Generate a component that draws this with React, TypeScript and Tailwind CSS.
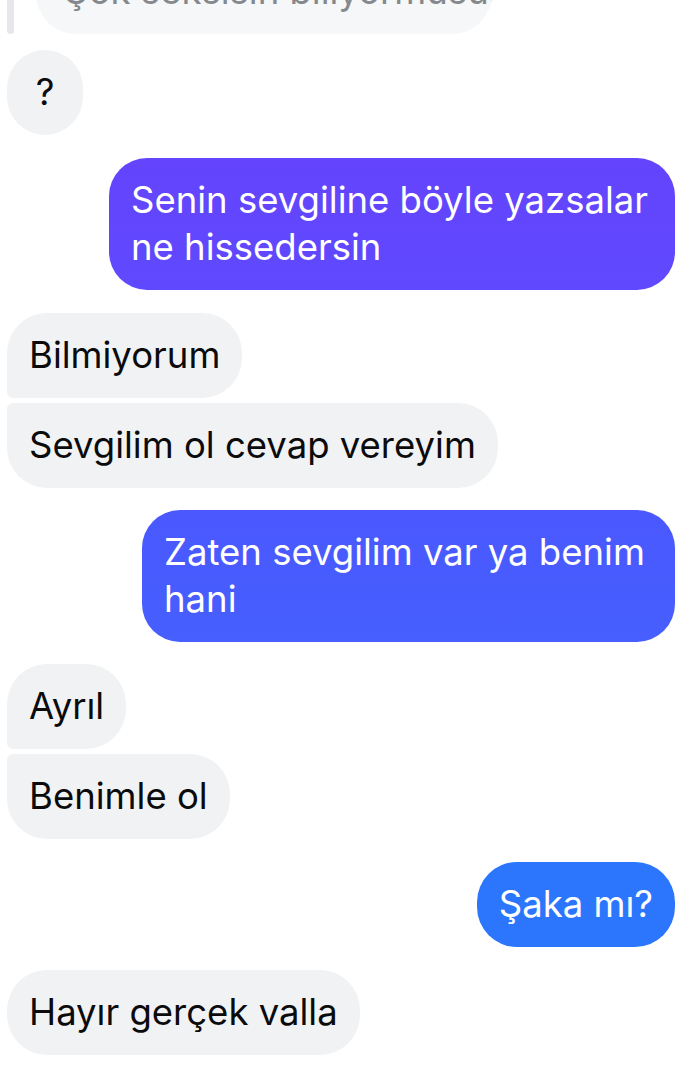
const font = { fontFamily: "Inter, 'Noto Sans', sans-serif" };

type Msg = {
  text: string;
  mine?: boolean;
  color?: string;
  width?: string;
  round: string;
  gap: string;
};

const messages: Msg[] = [
  { text: "?", round: "rounded-[40px] min-w-[76px] text-center", gap: "mt-4" },
  {
    text: "Senin sevgiline böyle yazsalar ne hissedersin",
    mine: true,
    color: "bg-gradient-to-b from-[#6444fd] to-[#5f49fe]",
    width: "w-[566px]",
    round: "rounded-[38px]",
    gap: "mt-[23px]",
  },
  { text: "Bilmiyorum", round: "rounded-[40px] rounded-bl-[6px]", gap: "mt-[23px]" },
  { text: "Sevgilim ol cevap vereyim", round: "rounded-[40px] rounded-tl-[6px]", gap: "mt-[5px]" },
  {
    text: "Zaten sevgilim var ya benim hani",
    mine: true,
    color: "bg-gradient-to-b from-[#4a58fe] to-[#465ffe]",
    width: "w-[533px]",
    round: "rounded-[38px]",
    gap: "mt-[22px]",
  },
  { text: "Ayrıl", round: "rounded-[40px] rounded-bl-[6px]", gap: "mt-[22px]" },
  { text: "Benimle ol", round: "rounded-[40px] rounded-tl-[6px]", gap: "mt-[5px]" },
  {
    text: "Şaka mı?",
    mine: true,
    color: "bg-[#2c76fe]",
    round: "rounded-[40px]",
    gap: "mt-[23px]",
  },
  { text: "Hayır gerçek valla", round: "rounded-[40px]", gap: "mt-[23px]" },
];

function Bubble({ m }: { m: Msg }) {
  return (
    <div className={`flex ${m.mine ? "justify-end" : "justify-start"} ${m.gap}`}>
      <div
        className={`${m.round} ${
          m.mine ? `${m.color} text-white ${m.width ?? ""}` : "bg-[#f1f2f4] text-[#0b0b0c]"
        } px-[22px] py-[19px] text-[36.5px] leading-[47px]`}
      >
        {m.text}
      </div>
    </div>
  );
}

export default function App() {
  return (
    <div className="w-[690px] h-[1086px] overflow-hidden bg-white pl-[7px] pr-[15px]" style={font}>
      {/* quoted reply */}
      <div className="flex gap-[22px] -mt-[51px]">
        <div className="w-[7px] mt-[51px] h-[34px] rounded-b-full bg-[#e6e7ea]" />
        <div className="rounded-[40px] bg-[#f6f7f8] text-[#85888d] px-[26px] py-[19px] text-[36.5px] leading-[47px] whitespace-nowrap w-[456px] overflow-hidden">
          Çok seksisin biliyormusun
        </div>
      </div>
      {messages.map((m, i) => (
        <Bubble key={i} m={m} />
      ))}
    </div>
  );
}
